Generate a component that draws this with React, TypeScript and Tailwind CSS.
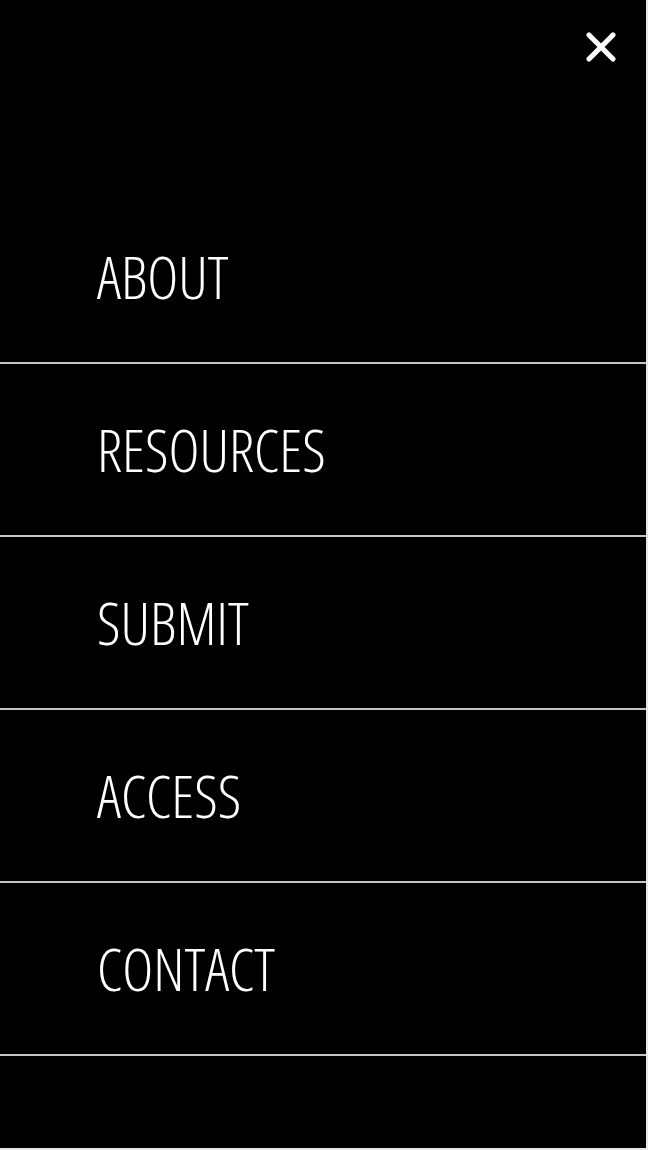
import { X } from "lucide-react";

const items = ["ABOUT", "RESOURCES", "SUBMIT", "ACCESS", "CONTACT"];

export default function App() {
    return (
        <div className="min-h-[1150px] w-[648px] bg-[#e6e6e6]">
            <nav className="relative h-[1148px] w-[646px] bg-black pt-[191px]">
                <button className="absolute right-[21px] top-[23px] text-white" aria-label="Close menu">
                    <X size={48} strokeWidth={2.6} strokeLinecap="round" />
                </button>
                <ul>
                    {items.map((item) => (
                        <li key={item} className="flex h-[173px] items-center border-b-2 border-[#c4c4c4]">
                            <a
                                href="#"
                                className="pl-[97px] text-[59px] leading-none font-light text-white [font-family:'Open_Sans',sans-serif] [font-stretch:75%]"
                            >
                                {item}
                            </a>
                        </li>
                    ))}
                </ul>
            </nav>
        </div>
    );
}
